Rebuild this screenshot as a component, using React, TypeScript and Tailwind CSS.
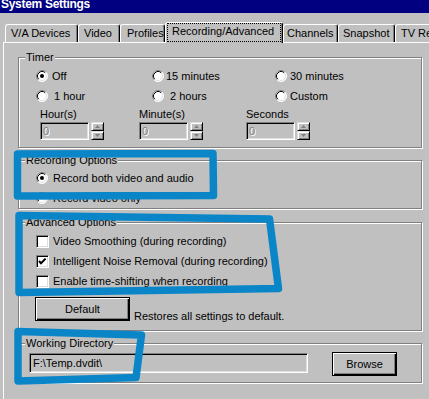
import type { ReactNode } from "react";

// Win95-style "System Settings" dialog, Recording/Advanced tab, with the
// blue marker annotations drawn over it.

const TABS = [
  { label: "V/A Devices", cls: "w-[73px] pl-[5px]" },
  { label: "Video", cls: "w-[42px] pl-[5px]" },
  { label: "Profiles", cls: "w-[45px] pl-[6px]" },
  { label: "Recording/Advanced", cls: "", selected: true },
  { label: "Channels", cls: "w-[55px] pl-[3px]" },
  { label: "Snapshot", cls: "w-[57px] pl-[4px]" },
  { label: "TV Recording", cls: "w-[80px] pl-[5px]" },
];

function Radio({ checked = false }: { checked?: boolean }) {
  return (
    <svg width="12" height="12" viewBox="0 0 12 12" className="shrink-0">
      <circle cx="6" cy="6" r="5.5" fill="#fff" />
      <path d="M2.11 9.89 A5.5 5.5 0 0 1 9.89 2.11" fill="none" stroke="#808080" strokeWidth="1" />
      <path d="M9.89 2.11 A5.5 5.5 0 0 1 2.11 9.89" fill="none" stroke="#fff" strokeWidth="1" />
      <path d="M2.82 9.18 A4.5 4.5 0 0 1 9.18 2.82" fill="none" stroke="#000" strokeWidth="1" />
      <path d="M9.18 2.82 A4.5 4.5 0 0 1 2.82 9.18" fill="none" stroke="#dfdfdf" strokeWidth="1" />
      {checked && <circle cx="6" cy="6" r="2" fill="#000" />}
    </svg>
  );
}

function Checkbox({ checked = false }: { checked?: boolean }) {
  return (
    <div className="h-[13px] w-[13px] shrink-0 border border-t-[#808080] border-l-[#808080] border-b-white border-r-white bg-white shadow-[inset_1px_1px_0_#000,inset_-1px_-1px_0_#dfdfdf]">
      {checked && (
        <svg width="11" height="11" viewBox="0 0 11 11">
          <path d="M2 5 L4 7.2 L8.6 2.6" fill="none" stroke="#000" strokeWidth="2" />
        </svg>
      )}
    </div>
  );
}

function GroupBox({ label, className, children }: { label: string; className: string; children?: ReactNode }) {
  return (
    <div
      className={`relative w-[404px] border border-[#808080] shadow-[inset_1px_1px_0_#fff,1px_1px_0_#fff] ${className}`}
    >
      <span className="absolute left-[6px] top-[-7px] whitespace-nowrap bg-[#c0c0c0] px-[1px]">{label}</span>
      {children}
    </div>
  );
}

function RadioItem({ checked, label, gap }: { checked?: boolean; label: string; gap: string }) {
  return (
    <div className="flex items-center">
      <Radio checked={checked} />
      <span className={`whitespace-nowrap ${gap}`}>{label}</span>
    </div>
  );
}

function CheckItem({ checked, label }: { checked?: boolean; label: string }) {
  return (
    <div className="flex h-[20px] items-center">
      <Checkbox checked={checked} />
      <span className="ml-[4px] whitespace-nowrap">{label}</span>
    </div>
  );
}

function Arrow({ up }: { up?: boolean }) {
  return (
    <svg width="5" height="3" viewBox="0 0 5 3">
      <path d={up ? "M2.5 0 L5 3 L0 3 Z" : "M0 0 L5 0 L2.5 3 Z"} fill="#808080" />
    </svg>
  );
}

function SpinButton({ up }: { up?: boolean }) {
  return (
    <div className="flex h-[9px] w-[13px] items-center justify-center border border-t-[#dfdfdf] border-l-[#dfdfdf] border-b-black border-r-black bg-[#c0c0c0] shadow-[inset_1px_1px_0_#fff,inset_-1px_-1px_0_#808080]">
      <Arrow up={up} />
    </div>
  );
}

function NumField() {
  return (
    <div className="flex items-start gap-[2px]">
      <div className="flex h-[18px] w-[49px] items-center border border-t-[#808080] border-l-[#808080] border-b-white border-r-white bg-[#c0c0c0] pl-[2px] text-[#808080] shadow-[inset_1px_1px_0_#000,inset_-1px_-1px_0_#dfdfdf] [text-shadow:1px_1px_0_#fff]">
        0
      </div>
      <div className="flex flex-col">
        <SpinButton up />
        <SpinButton />
      </div>
    </div>
  );
}

function Button({ label, className }: { label: string; className: string }) {
  return (
    <div
      className={`flex h-[24px] shrink-0 items-center justify-center border border-black bg-[#c0c0c0] shadow-[inset_1px_1px_0_#fff,inset_-1px_-1px_0_#000,inset_-2px_-2px_0_#808080] ${className}`}
    >
      {label}
    </div>
  );
}

export default function App() {
  return (
    <div className="relative h-[399px] w-[429px] overflow-hidden bg-[#c0c0c0] font-['Liberation_Sans',Arial,sans-serif] text-[11px] leading-[13px] text-black">
      {/* title bar */}
      <div className="h-[13px] overflow-hidden bg-[#000080]">
        <div className="mt-[-3px] pl-[1px] text-[12px] font-bold leading-[14px] tracking-[-0.3px] text-white">
          System Settings
        </div>
      </div>

      {/* tabs */}
      <div className="relative z-10 mt-[9px] flex h-[20px] items-end pl-[5px]">
        {TABS.map((t) =>
          t.selected ? (
            <div
              key={t.label}
              className="mb-[-1px] h-[21px] w-[118px] shrink-0 rounded-t-[3px] border-l border-t border-r border-l-white border-t-white border-r-black bg-[#c0c0c0] shadow-[inset_-1px_0_0_#808080]"
            >
              <div className="mx-[1px] h-[19px] whitespace-nowrap border border-dotted border-black pl-[4px] pt-[1px]">
                {t.label}
              </div>
            </div>
          ) : (
            <div
              key={t.label}
              className={`h-[18px] shrink-0 whitespace-nowrap rounded-t-[3px] border-l border-t border-r border-l-white border-t-white border-r-black pt-[2px] shadow-[inset_-1px_0_0_#808080] ${t.cls}`}
            >
              {t.label}
            </div>
          )
        )}
      </div>

      {/* tab panel */}
      <div className="ml-[3px] h-[357px] w-[440px] border-l border-t border-white pl-[14px] pt-[14px]">
        <GroupBox label="Timer" className="h-[91px] pl-[17px] pt-[8px]">
          <div className="grid grid-cols-[116px_123px_1fr]">
            <div className="flex h-[20px] items-center"><RadioItem checked label="Off" gap="ml-[4px]" /></div>
            <div className="flex h-[20px] items-center"><RadioItem label="15 minutes" gap="ml-[2px]" /></div>
            <div className="flex h-[20px] items-center"><RadioItem label="30 minutes" gap="ml-[3px]" /></div>
            <div className="flex h-[20px] items-center"><RadioItem label="1 hour" gap="ml-[6px]" /></div>
            <div className="flex h-[20px] items-center"><RadioItem label="2 hours" gap="ml-[6px]" /></div>
            <div className="flex h-[20px] items-center"><RadioItem label="Custom" gap="ml-[3px]" /></div>
          </div>
          <div className="ml-[4px] mt-[2px] grid grid-cols-[99px_107px_1fr]">
            <span>Hour(s)</span>
            <span>Minute(s)</span>
            <span>Seconds</span>
          </div>
          <div className="ml-[4px] mt-[1px] grid grid-cols-[99px_107px_1fr]">
            <NumField />
            <NumField />
            <NumField />
          </div>
        </GroupBox>

        <GroupBox label="Recording Options" className="mt-[12px] h-[49px] pl-[17px] pt-[7px]">
          <div className="flex h-[20px] items-center">
            <RadioItem checked label="Record both video and audio" gap="ml-[5px]" />
          </div>
          <div className="flex h-[20px] items-center">
            <RadioItem label="Record video only" gap="ml-[5px]" />
          </div>
        </GroupBox>

        <GroupBox label="Advanced Options" className="mt-[13px] h-[109px] pl-[17px] pt-[8px]">
          <CheckItem label="Video Smoothing (during recording)" />
          <CheckItem checked label="Intelligent Noise Removal (during recording)" />
          <CheckItem label="Enable time-shifting when recording" />
          <div className="ml-[-1px] mt-[6px] flex items-start">
            <Button label="Default" className="w-[95px]" />
            <span className="ml-[4px] mt-[13px] whitespace-nowrap">Restores all settings to default.</span>
          </div>
        </GroupBox>

        <GroupBox label="Working Directory" className="mt-[12px] flex h-[40px] items-start pl-[10px]">
          <div className="mt-[9px] flex h-[20px] w-[279px] items-center border border-t-[#808080] border-l-[#808080] border-b-white border-r-white bg-[#c0c0c0] pl-[3px] shadow-[inset_1px_1px_0_#000,inset_-1px_-1px_0_#dfdfdf]">
            F:\Temp.dvdit\
          </div>
          <Button label="Browse" className="ml-[24px] mt-[8px] w-[65px]" />
        </GroupBox>
      </div>

      {/* marker annotations */}
      <svg
        className="pointer-events-none absolute left-0 top-0"
        width="429"
        height="399"
        viewBox="0 0 429 399"
      >
        <g fill="none" stroke="#0a86c8" strokeWidth="7.5" strokeLinejoin="round" strokeLinecap="round">
          <path d="M17.5 154 L213 153.5 L213.5 195.5 L17.5 196 Z" />
          <path d="M19 215.5 L269.5 219 L278.5 288.5 L19 292.5 Z" />
          <path d="M18 331.5 L141.5 335 L136 377.5 L18 381 Z" />
        </g>
      </svg>
    </div>
  );
}
